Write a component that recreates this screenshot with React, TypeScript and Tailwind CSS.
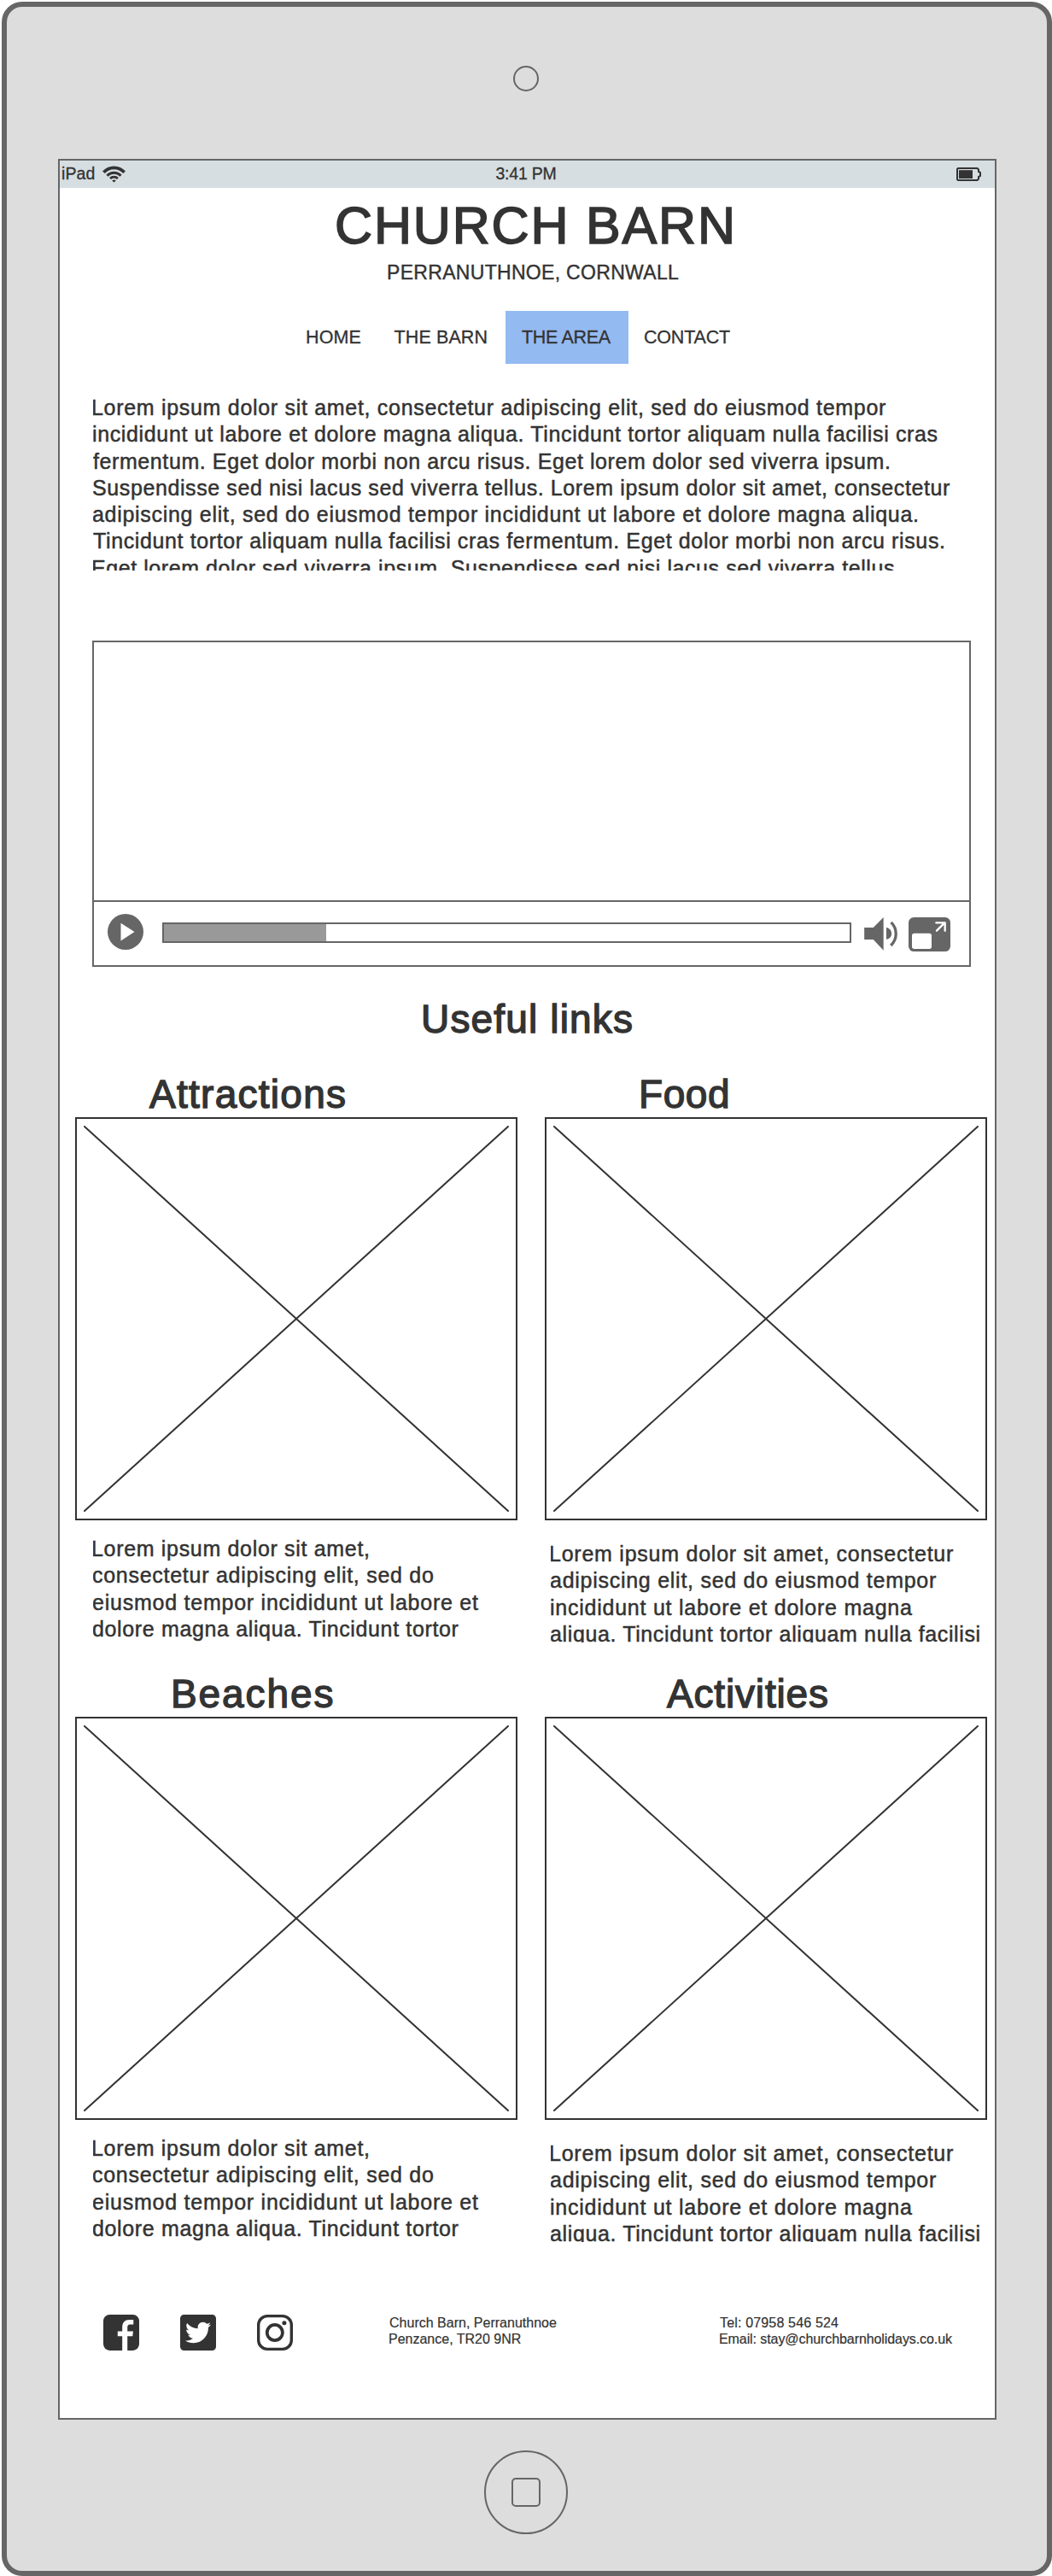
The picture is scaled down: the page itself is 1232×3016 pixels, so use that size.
import React from 'react';
import { FaTwitterSquare } from 'react-icons/fa';

const SIZES = {
  title: { px: 61, cls: 'text-[61px] leading-[70px] [-webkit-text-stroke:1.6px_#333]' },
  heading: { px: 46, cls: 'text-[46px] leading-[56px] [-webkit-text-stroke:1.4px_#333]' },
  subtitle: { px: 23, cls: 'text-[23px] leading-[28px] [-webkit-text-stroke:0.4px_#333]' },
  nav: { px: 21.5, cls: 'text-[21.5px] leading-[28px] [-webkit-text-stroke:0.3px_#333]' },
  status: { px: 19.5, cls: 'text-[19.5px] leading-[24px] [-webkit-text-stroke:0.3px_#333]' },
  body: { px: 25, cls: 'text-[25px] leading-[31.25px] [-webkit-text-stroke:0.5px_#333]' },
  small: { px: 16, cls: 'text-[16px] leading-[19.4px] [-webkit-text-stroke:0.2px_#333]' },
};

const ctx = document.createElement('canvas').getContext('2d')!;

/** One line of text, tracked so that its ink fills `width` pixels. */
function Line({ kind, width, children, className = '' }: { kind: keyof typeof SIZES; width: number; children: string; className?: string }) {
  const s = SIZES[kind];
  ctx.font = `${s.px}px "Liberation Sans"`;
  const m = ctx.measureText(children);
  const ink = m.actualBoundingBoxLeft + m.actualBoundingBoxRight;
  const tracking = (width - ink) / (children.length - 1);
  return (
    <div className={`shrink-0 whitespace-nowrap ${s.cls} ${className}`} style={{ width }}>
      <span style={{ letterSpacing: tracking, marginLeft: m.actualBoundingBoxLeft }}>{children}</span>
    </div>
  );
}

const INTRO: [string, number][] = [
  ['Lorem ipsum dolor sit amet, consectetur adipiscing elit, sed do eiusmod tempor', 928],
  ['incididunt ut labore et dolore magna aliqua. Tincidunt tortor aliquam nulla facilisi cras', 989],
  ['fermentum. Eget dolor morbi non arcu risus. Eget lorem dolor sed viverra ipsum.', 932],
  ['Suspendisse sed nisi lacus sed viverra tellus. Lorem ipsum dolor sit amet, consectetur', 1003],
  ['adipiscing elit, sed do eiusmod tempor incididunt ut labore et dolore magna aliqua.', 965],
  ['Tincidunt tortor aliquam nulla facilisi cras fermentum. Eget dolor morbi non arcu risus.', 996],
  ['Eget lorem dolor sed viverra ipsum. Suspendisse sed nisi lacus sed viverra tellus.', 944],
];
const LEFT: [string, number][] = [
  ['Lorem ipsum dolor sit amet,', 322],
  ['consectetur adipiscing elit, sed do', 398],
  ['eiusmod tempor incididunt ut labore et', 451],
  ['dolore magna aliqua. Tincidunt tortor', 428],
];
const RIGHT: [string, number][] = [
  ['Lorem ipsum dolor sit amet, consectetur', 471],
  ['adipiscing elit, sed do eiusmod tempor', 451],
  ['incididunt ut labore et dolore magna', 423],
  ['aliqua. Tincidunt tortor aliquam nulla facilisi', 502],
];

function Paragraph({ lines, className }: { lines: [string, number][]; className: string }) {
  return (
    <div className={`overflow-hidden ${className}`}>
      {lines.map(([t, w]) => (
        <Line key={t} kind="body" width={w}>{t}</Line>
      ))}
    </div>
  );
}

function ImagePlaceholder() {
  return (
    <div className="-mt-px h-[472px] w-[518px] border-2 border-[#333]">
      <svg viewBox="0 0 514 468" className="block h-[468px] w-[514px]" stroke="#333" strokeWidth="2" strokeLinecap="round">
        <path d="M9 9L505 459M505 9L9 459" />
      </svg>
    </div>
  );
}

function Card({ title, titleWidth, titleClass, lines, textClass }: { title: string; titleWidth: number; titleClass: string; lines: [string, number][]; textClass: string }) {
  return (
    <section className="h-[702px] w-[518px]">
      <Line kind="heading" width={titleWidth} className={titleClass}>{title}</Line>
      <ImagePlaceholder />
      <Paragraph lines={lines} className={textClass} />
    </section>
  );
}

function Wifi() {
  return (
    <svg viewBox="0 0 27 20" className="h-5 w-[27px]" fill="none" stroke="#333" strokeWidth="3.8">
      <path d="M1.4 7.8C8 0.6 19 0.6 25.6 7.8" />
      <path d="M5.4 11.6C10 7 17 7 21.6 11.6" strokeWidth="3" />
      <path d="M9 15C11.6 12.4 15.4 12.4 18 15" strokeWidth="2.8" />
      <path d="M11.2 17.4C12.6 16.2 14.4 16.2 15.8 17.4L13.5 19.6Z" fill="#333" stroke="none" />
    </svg>
  );
}

function Battery() {
  return (
    <svg viewBox="0 0 29 16" className="h-4 w-[29px]">
      <path d="M2 1H24.5L26 2.5V5L28 6V10L26 11V13.5L24.5 15H2L1 14V2Z" fill="none" stroke="#333" strokeWidth="2" strokeLinejoin="round" />
      <rect x="3" y="3.2" width="16" height="9.8" fill="#333" />
    </svg>
  );
}

function VideoPlayer() {
  return (
    <div className="ml-[38px] mt-[82px] flex h-[382px] w-[1029px] flex-col border-2 border-[#666]">
      <div className="h-[304px] border-b-2 border-[#666]" />
      <div className="flex flex-1">
        <svg viewBox="0 0 42 42" className="ml-4 mt-[14px] size-[42px]">
          <circle cx="21" cy="21" r="21" fill="#666" />
          <path d="M15.5 10.7V31.5L31.5 21Z" fill="#fff" />
        </svg>
        <div className="ml-[22px] mt-6 h-6 w-[807px] border-2 border-[#666]">
          <div className="h-full w-[190px] bg-[#999]" />
        </div>
        <svg viewBox="36 43 120 118" className="ml-[15px] mt-[18px] h-[39px] w-10" fill="#666">
          <path d="M36 79H68L104 43V160L68 122H36Z" />
          <path d="M114 79C139 83 139 118 114 121Z" />
          <path d="M131 61C154 84 154 120 130 143" fill="none" stroke="#666" strokeWidth="10" />
        </svg>
        <svg viewBox="190 42 147 120" className="ml-3 mt-[18px] h-10 w-[49px]">
          <rect x="190" y="42" width="147" height="120" rx="19" fill="#666" />
          <rect x="202" y="98" width="69" height="55" rx="8" fill="#fff" />
          <path d="M289 89L317 61M287 61H318V89" fill="none" stroke="#fff" strokeWidth="7" strokeLinecap="round" strokeLinejoin="round" />
        </svg>
      </div>
    </div>
  );
}

function Facebook() {
  return (
    <svg viewBox="0 0 125 125" className="size-[42px]">
      <rect width="125" height="125" rx="22" fill="#333" />
      <path d="M66 125V75H50V58H66V44C66 27 76 18 90 18H105V34H95C86 34 84 38 84 45V58H104L102 75H84V125Z" fill="#fff" />
    </svg>
  );
}

function Instagram() {
  return (
    <svg viewBox="0 0 125 125" className="size-[42px]" fill="none" stroke="#333">
      <rect x="5" y="5" width="115" height="115" rx="31" strokeWidth="10" />
      <circle cx="62" cy="62.5" r="27" strokeWidth="11" />
      <circle cx="95" cy="29" r="7.5" fill="#333" stroke="none" />
    </svg>
  );
}

export default function App() {
  return (
    <div className="h-[3016px] w-[1232px] bg-white pl-[2px] pt-[2px] font-['Liberation_Sans',sans-serif] text-[#333]">
      <div className="h-[3014px] w-[1230px] rounded-[24px] border-[6px] border-[#666] bg-[#ddd]">
        <div className="h-[178px] pl-[593px] pt-[69px]">
          <div className="size-[30px] rounded-full border-2 border-[#666]" />
        </div>

        <main className="ml-[60px] h-[2647px] w-[1099px] border-2 border-[#666] bg-white">
          <div className="flex h-8 items-start bg-[#d7dee1] pl-[3px] pt-[3px]">
            <Line kind="status" width={37.5}>iPad</Line>
            <div className="ml-[9px] mt-[3px]"><Wifi /></div>
            <Line kind="status" width={70} className="ml-[434px]">3:41 PM</Line>
            <div className="ml-[469px] mt-[5px]"><Battery /></div>
          </div>

          <header>
            <h1><Line kind="title" width={462} className="ml-[325px] mt-[9px]">CHURCH BARN</Line></h1>
            <Line kind="subtitle" width={341} className="ml-[384px] mt-[6px]">PERRANUTHNOE, CORNWALL</Line>
            <nav className="ml-[289px] mt-[31px] flex h-[62px]">
              <Line kind="nav" width={63.5} className="mt-[17px]">HOME</Line>
              <Line kind="nav" width={108} className="ml-[39px] mt-[17px]">THE BARN</Line>
              <div className="ml-[22.5px] w-[144px] bg-[#94baf2] pl-[19px] pt-[17px]">
                <Line kind="nav" width={106}>THE AREA</Line>
              </div>
              <Line kind="nav" width={100} className="ml-[19px] mt-[17px]">CONTACT</Line>
            </nav>
          </header>

          <Paragraph lines={INTRO} className="ml-[39px] mt-[36px] h-[206px]" />
          <VideoPlayer />

          <h2><Line kind="heading" width={244} className="ml-[426px] mt-[33px]">Useful links</Line></h2>

          <div className="ml-[18px] mt-8 grid grid-cols-[519px_518px] gap-x-[31px]">
            <Card title="Attractions" titleWidth={229} titleClass="ml-[87px]" lines={LEFT} textClass="ml-[21px] mt-[18px] h-[128px]" />
            <Card title="Food" titleWidth={101} titleClass="ml-[113px]" lines={RIGHT} textClass="ml-[7px] mt-6 h-[119px]" />
            <Card title="Beaches" titleWidth={186.5} titleClass="ml-[115px]" lines={LEFT} textClass="ml-[21px] mt-[18px] h-[128px]" />
            <Card title="Activities" titleWidth={188} titleClass="ml-[143px]" lines={RIGHT} textClass="ml-[7px] mt-6 h-[119px]" />
          </div>

          <footer className="ml-[51px] mt-[53px] flex items-start">
            <Facebook />
            <FaTwitterSquare className="-mt-[3px] ml-12 h-12 w-[42px]" color="#333" />
            <div className="ml-12"><Instagram /></div>
            <div className="ml-[113px] w-[387px]">
              <Line kind="small" width={196}>Church Barn, Perranuthnoe</Line>
              <Line kind="small" width={154}>Penzance, TR20 9NR</Line>
            </div>
            <div>
              <Line kind="small" width={139}>Tel: 07958 546 524</Line>
              <Line kind="small" width={273}>Email: stay@churchbarnholidays.co.uk</Line>
            </div>
          </footer>
        </main>

        <div className="flex pl-[559px] pt-[36px]">
          <div className="flex size-[98px] items-center justify-center rounded-full border-2 border-[#666]">
            <div className="size-[34px] rounded-[5px] border-2 border-[#666]" />
          </div>
        </div>
      </div>
    </div>
  );
}
